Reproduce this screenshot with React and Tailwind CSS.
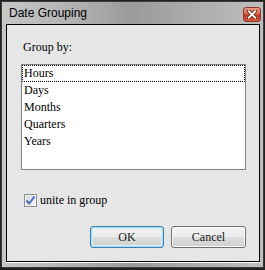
export default function App() {
  const items = ["Hours", "Days", "Months", "Quarters", "Years"];
  return (
    <div className="w-[265px] h-[270px] bg-[#202020] pt-[1px] pl-[1px] overflow-hidden">
      <div className="w-[263px] h-[267px] border border-[#3c3c3c] flex flex-col bg-[linear-gradient(90deg,#c6c6c6,#b4b4b4_25%,#9a9a9a_50%,#ababab_72%,#bdbdbd)]">
        <div className="h-[22px] flex items-start justify-between pl-[7px] pr-[2px] shrink-0">
          <span className="mt-[4px] font-['Liberation_Sans',sans-serif] text-[12px] leading-[14px] text-black">
            Date Grouping
          </span>
          <div className="mt-[5px] w-[18px] h-[15px] rounded-[3px] border border-[#8a3a28] bg-[linear-gradient(180deg,#e99a82,#dc6446_45%,#c8341a_55%,#d8553a)] flex items-center justify-center">
            <svg width="10" height="9" viewBox="0 0 10 9">
              <path d="M1.5 1 L8.5 8 M8.5 1 L1.5 8" stroke="#5c3028" strokeWidth="3.4" strokeLinecap="square" />
              <path d="M1.8 1.3 L8.2 7.7 M8.2 1.3 L1.8 7.7" stroke="#ffffff" strokeWidth="1.8" strokeLinecap="square" />
            </svg>
          </div>
        </div>
        <div className="ml-[4px] mr-[3px] mb-[5px] flex-1 border border-black bg-[#e6e6e6] shadow-[0_1px_0_0_#ffffff] flex flex-col pl-[14px] pr-[13px] pt-[15px] font-['Liberation_Serif',serif] text-[12px] text-black">
          <div className="h-[14px] leading-[14px] ml-[2px]">Group by:</div>
          <div className="mt-[10px] h-[106px] border border-[#828282] bg-white flex flex-col">
            {items.map((it, i) => (
              <div
                key={it}
                className={
                  i === 0
                    ? "h-[17px] leading-[15px] border border-dotted border-black pl-[1px]"
                    : "h-[17px] leading-[17px] pl-[2px]"
                }
              >
                {it}
              </div>
            ))}
          </div>
          <div className="mt-[23px] h-[14px] flex items-center ml-[3px]">
            <div className="w-[13px] h-[13px] border border-[#8e8f8f] bg-[linear-gradient(135deg,#d8d8d8,#f6f6f6)] flex items-center justify-center shadow-[inset_0_0_0_1px_#f4f4f4]">
              <svg width="11" height="11" viewBox="0 0 11 11">
                <path d="M1.5 5.5 L4.2 8.5 L9.5 1.5" fill="none" stroke="#3a6fc8" strokeWidth="2" strokeLinejoin="round" />
              </svg>
            </div>
            <span className="ml-[3px] leading-[14px]">unite in group</span>
          </div>
          <div className="mt-[19px] flex justify-end gap-[7px]">
            <button className="w-[74px] h-[22px] rounded-[3px] border border-[#3c7fb1] bg-[linear-gradient(180deg,#f2f2f2,#ebebeb_50%,#dddddd_50%,#cfcfcf)] shadow-[inset_0_0_0_1px_#a6dcf6,inset_0_0_0_2px_#d4eefb] text-[12px] text-[#1a1a1a] leading-[20px]">
              OK
            </button>
            <button className="w-[75px] h-[22px] rounded-[3px] border border-[#707070] bg-[linear-gradient(180deg,#f2f2f2,#ebebeb_50%,#dddddd_50%,#cfcfcf)] shadow-[inset_0_0_0_1px_#fcfcfc] text-[12px] text-[#1a1a1a] leading-[20px]">
              Cancel
            </button>
          </div>
        </div>
      </div>
    </div>
  );
}
